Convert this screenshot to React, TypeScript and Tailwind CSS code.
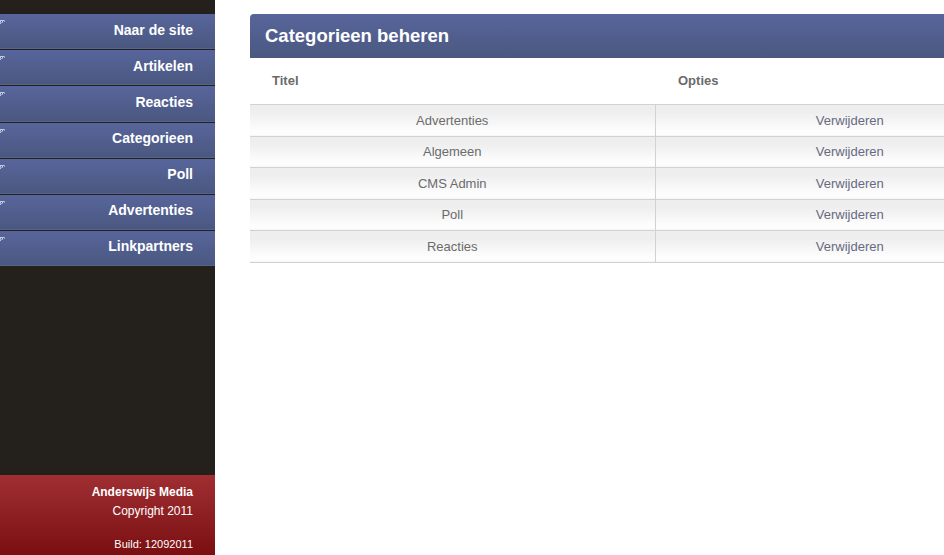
const MENU = ["Naar de site", "Artikelen", "Reacties", "Categorieen", "Poll", "Advertenties", "Linkpartners"];
const CATEGORIES = ["Advertenties", "Algemeen", "CMS Admin", "Poll", "Reacties"];

function Dots() {
  return (
    <svg className="absolute left-0 top-[6px]" width="6" height="6" viewBox="0 0 6 6" shapeRendering="crispEdges">
      <path d="M0 0h4v1H0zM0 1h1v1H0zM2 1h1v1H2z" fill="#c3c8de" />
      <path d="M4 0h1v2H4zM0 2h3v1H0z" fill="#98a0c4" />
      <path d="M0 3h1v1H0z" fill="#c3c8de" />
    </svg>
  );
}

export default function App() {
  return (
    <div className="flex h-screen overflow-hidden bg-white font-['Liberation_Sans',Arial,sans-serif]">
      <aside className="flex w-[215px] shrink-0 flex-col bg-[#24211c]">
        <nav className="flex flex-1 flex-col gap-px pt-[14.04px]">
          {MENU.map((item) => (
            <a
              key={item}
              className="relative flex h-[35.16px] items-center justify-end border-b border-[#56638c] bg-gradient-to-b from-[#58659c] to-[#4a5880] pb-[3.2px] pr-[22px] text-sm font-bold text-white"
            >
              <Dots />
              {item}
            </a>
          ))}
        </nav>
        <footer className="flex h-[80px] flex-col items-end bg-gradient-to-b from-[#a02e32] to-[#7a0e10] pr-[22px] pt-[9px] text-xs text-white">
          <strong className="leading-[16px]">Anderswijs Media</strong>
          <span className="mt-[3px] leading-[16px]">Copyright 2011</span>
          <span className="mt-[17px] text-[11px] leading-[16px]">Build: 12092011</span>
        </footer>
      </aside>
      <main className="min-w-0 flex-1 pl-[35px] pt-[14px]">
        <h1 className="flex h-[44px] w-[794px] items-center rounded-tl-[4px] bg-gradient-to-b from-[#58659c] to-[#4a5880] pl-[15px] text-[18.5px] font-bold text-white">
          Categorieen beheren
        </h1>
        <table className="w-[794px] table-fixed border-collapse text-[#6b6b6b]">
          <thead>
            <tr className="h-[46px] text-left text-[13px]">
              <th className="w-[405px] pl-[22px] font-bold">Titel</th>
              <th className="pl-[23px] font-bold">Opties</th>
            </tr>
          </thead>
          <tbody>
            {CATEGORIES.map((name, i) => (
              <tr key={name} className={i % 2 ? "h-[31px] border-y border-[#d2d2d2] text-[13px]" : "h-[32px] border-y border-[#d2d2d2] text-[13px]"}>
                <td className={i % 2 ? "border-r border-[#d2d2d2] bg-gradient-to-b from-[#eeeeee] from-25% to-[#fdfdfd] to-85% p-0 text-center" : "border-r border-[#d2d2d2] bg-gradient-to-b from-[#eeeeee] from-25% to-[#fdfdfd] to-85% p-0 pt-[2px] text-center"}>{name}</td>
                <td className={i % 2 ? "bg-gradient-to-b from-[#eeeeee] from-25% to-[#fdfdfd] to-85% p-0 text-center text-[#666a80]" : "bg-gradient-to-b from-[#eeeeee] from-25% to-[#fdfdfd] to-85% p-0 pt-[2px] text-center text-[#666a80]"}>Verwijderen</td>
              </tr>
            ))}
          </tbody>
        </table>
      </main>
    </div>
  );
}
